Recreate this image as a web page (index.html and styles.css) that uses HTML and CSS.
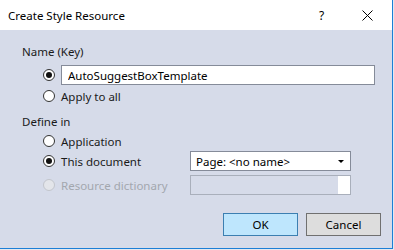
FILE: index.html
```html
<!DOCTYPE html>
<html lang="en">
<head>
    <meta charset="UTF-8">
    <meta name="viewport" content="width=device-width, initial-scale=1.0">
    <title>Create Style Resource</title>
    <link rel="stylesheet" href="styles.css">
</head>
<body>
    <div class="dialog">
        <div class="titlebar">
            <span class="title">Create Style Resource</span>
            <span class="help">?</span>
            <span class="close">
                <svg width="11" height="11" viewBox="0 0 11 11">
                    <path d="M0.5 0.5 L10.5 10.5 M10.5 0.5 L0.5 10.5" stroke="#000" stroke-width="1" fill="none"/>
                </svg>
            </span>
        </div>

        <div class="content">
            <div class="section-label">Name (Key)</div>
            <div class="row first">
                <span class="radio checked"></span>
                <input type="text" class="textbox" value="AutoSuggestBoxTemplate">
            </div>
            <div class="row tight">
                <span class="radio"></span>
                <span class="option">Apply to all</span>
            </div>

            <div class="section-label define">Define in</div>
            <div class="row tight">
                <span class="radio"></span>
                <span class="option">Application</span>
            </div>
            <div class="row">
                <span class="radio checked"></span>
                <span class="option fixed">This document</span>
                <div class="combo">
                    <span>Page: &lt;no name&gt;</span>
                    <span class="arrow"></span>
                </div>
            </div>
            <div class="row gap">
                <span class="radio disabled"></span>
                <span class="option fixed disabled">Resource dictionary</span>
                <div class="combo off">
                    <span class="off-end"></span>
                </div>
            </div>

            <div class="buttons">
                <button type="button" class="btn primary">OK</button>
                <button type="button" class="btn">Cancel</button>
            </div>
        </div>
    </div>
</body>
</html>
```

FILE: styles.css
```css
body {
    margin: 0;
    padding: 0;
    background: #e4e8f0;
    font-family: "Noto Sans", "Open Sans", sans-serif;
    font-size: 11.5px;
    color: #1a1a1a;
}
.dialog {
    width: 392px;
    height: 248px;
    background: #d6dbe9;
    border-right: 1px solid #1c7fd6;
    border-bottom: 1px solid #1c7fd6;
}
.titlebar {
    display: flex;
    align-items: center;
    height: 30px;
    background: white;
    padding-left: 8px;
}
.title {
    flex: 1;
    font-size: 11.5px;
    color: #000;
}
.help {
    width: 10px;
    margin-right: 33px;
    font-size: 12px;
    color: #000;
}
.close {
    display: flex;
    width: 11px;
    margin-right: 19px;
}
.content {
    display: flex;
    flex-direction: column;
    padding: 14px 11px 0 22px;
}
.section-label {
    line-height: 16px;
}
.section-label.define {
    margin-top: 8px;
}
.row {
    display: flex;
    align-items: center;
    height: 20px;
    padding-left: 21px;
}
.row.first {
    margin-top: 5px;
}
.row.tight {
    margin-top: 1px;
}
.row.gap {
    margin-top: 4px;
}
.radio {
    box-sizing: border-box;
    width: 12px;
    height: 12px;
    border: 1px solid #333;
    border-radius: 50%;
    background: white;
    margin-right: 6px;
    display: flex;
    align-items: center;
    justify-content: center;
    flex-shrink: 0;
}
.radio.checked::after {
    content: "";
    width: 6px;
    height: 6px;
    border-radius: 50%;
    background: #111;
}
.radio.disabled {
    border-color: #c2c5cc;
    background: #e3e5ea;
}
.option.fixed {
    width: 129px;
}
.option.disabled {
    color: #a3a7ae;
}
.textbox {
    box-sizing: border-box;
    width: 314px;
    height: 20px;
    border: 1px solid #858b99;
    padding: 0 0 0 6px;
    font: inherit;
    color: #000;
    background: white;
    outline: none;
}
.combo {
    box-sizing: border-box;
    display: flex;
    align-items: center;
    justify-content: space-between;
    width: 161px;
    height: 20px;
    border: 1px solid #858b99;
    background: white;
    padding: 0 6px 0 5px;
    color: #000;
}
.arrow {
    width: 0;
    height: 0;
    border-left: 3px solid transparent;
    border-right: 3px solid transparent;
    border-top: 3px solid #000;
}
.combo.off {
    background: #d6dbe9;
    border-color: #a9afbb;
    justify-content: flex-end;
    padding: 0;
}
.off-end {
    width: 12px;
    height: 18px;
    background: white;
}
.buttons {
    display: flex;
    justify-content: flex-end;
    gap: 8px;
    margin-top: 18px;
}
.btn {
    box-sizing: border-box;
    width: 75px;
    height: 23px;
    border: 1px solid #707070;
    background: #dddddd;
    font: inherit;
    color: #000;
    padding: 0;
}
.btn.primary {
    background: #bee6fd;
    border-color: #3c7fb1;
}
```
